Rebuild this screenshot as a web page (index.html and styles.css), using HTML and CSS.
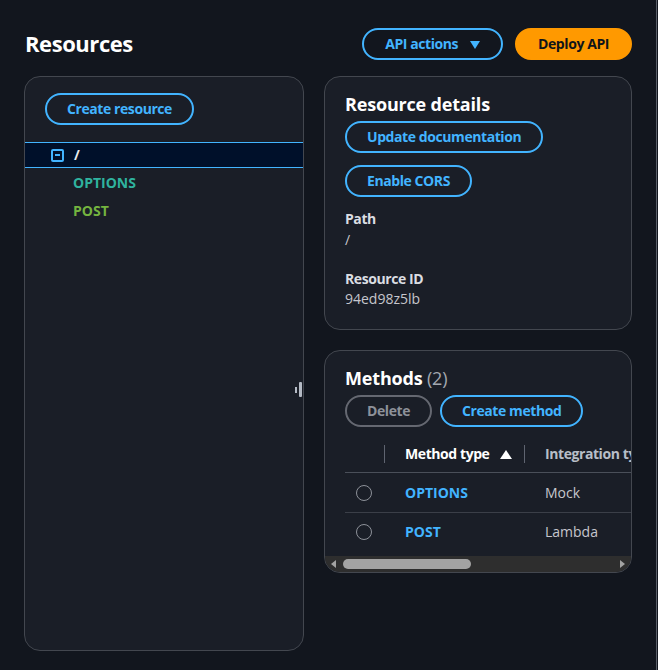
FILE: index.html
```html
<!DOCTYPE html>
<html lang="en">
<head>
<meta charset="utf-8">
<title>Resources</title>
<link rel="stylesheet" href="styles.css">
</head>
<body>
<div class="page">
  <header class="top">
    <h1 class="title">Resources</h1>
    <div class="actions">
      <button class="btn btn-normal btn-wide">API actions <span class="caret"></span></button>
      <button class="btn btn-primary">Deploy API</button>
    </div>
  </header>
  <div class="main">
    <section class="panel tree-panel">
      <div class="tree-top">
        <button class="btn btn-normal">Create resource</button>
      </div>
      <div class="tree-row selected">
        <span class="toggle"><span class="minus"></span></span>
        <span class="path">/</span>
      </div>
      <div class="tree-method m-options">OPTIONS</div>
      <div class="tree-method m-post">POST</div>
      <span class="resizer"><span class="r1"></span><span class="r2"></span></span>
    </section>
    <div class="right">
      <section class="panel card details">
        <h2 class="card-title">Resource details</h2>
        <div class="btn-stack">
          <button class="btn btn-normal">Update documentation</button>
          <button class="btn btn-normal">Enable CORS</button>
        </div>
        <dl class="kv">
          <dt>Path</dt>
          <dd>/</dd>
          <dt class="gap">Resource ID</dt>
          <dd>94ed98z5lb</dd>
        </dl>
      </section>
      <section class="panel card methods">
        <h2 class="card-title">Methods <span class="count">(2)</span></h2>
        <div class="btn-row">
          <button class="btn btn-disabled">Delete</button>
          <button class="btn btn-normal">Create method</button>
        </div>
        <div class="table-wrap">
          <div class="table">
            <div class="tr th">
              <div class="c c-sel"></div>
              <div class="c c-type sorted"><span>Method type</span><span class="sort-up"></span></div>
              <div class="c c-int">Integration type</div>
            </div>
            <div class="tr">
              <div class="c c-sel"><span class="radio"></span></div>
              <div class="c c-type"><span class="link">OPTIONS</span></div>
              <div class="c c-int">Mock</div>
            </div>
            <div class="tr last">
              <div class="c c-sel"><span class="radio"></span></div>
              <div class="c c-type"><span class="link">POST</span></div>
              <div class="c c-int">Lambda</div>
            </div>
          </div>
        </div>
        <div class="hscroll">
          <span class="arrow-l"></span>
          <span class="thumb"></span>
          <span class="arrow-r"></span>
        </div>
      </section>
    </div>
  </div>
</div>
</body>
</html>
```
FILE: styles.css
```css
* { box-sizing: border-box; }
html, body { margin: 0; padding: 0; }
body {
  background: #12161e;
  font-family: "Open Sans", "Noto Sans", sans-serif;
  font-size: 14px;
  line-height: 20px;
  color: #c6c6cd;
  width: 658px;
  height: 670px;
  overflow: hidden;
}
.page {
  width: 657px;
  height: 670px;
  border-right: 1px solid #5b606a;
  padding: 28px 0 0 24px;
}
.top {
  width: 608px;
  height: 32px;
  display: flex;
  align-items: center;
  justify-content: space-between;
}
.title {
  margin: 0;
  font-size: 22px;
  font-weight: 700;
  letter-spacing: -0.02em;
  color: #ffffff;
  line-height: 30px;
  padding-left: 1px;
  margin-top: -2px;
}
.actions { display: flex; gap: 12px; }
.btn {
  font-family: inherit;
  font-size: 14px;
  font-weight: 700;
  letter-spacing: -0.03em;
  line-height: 20px;
  height: 32px;
  border-radius: 20px;
  padding: 4px 20px;
  background: transparent;
  cursor: pointer;
  display: inline-flex;
  align-items: center;
  white-space: nowrap;
}
.btn-normal {
  border: 2px solid #42b4ff;
  color: #42b4ff;
}
.btn-wide { padding: 4px 21px; }
.btn-primary {
  border: 2px solid #ff9900;
  background: #ff9900;
  color: #0f141a;
  padding: 4px 21px;
}
.btn-disabled {
  border: 2px solid #656871;
  color: #8d9199;
}
.caret {
  display: inline-block;
  width: 0; height: 0;
  border-left: 5px solid transparent;
  border-right: 5px solid transparent;
  border-top: 8px solid #42b4ff;
  margin-left: 12px;
  margin-top: 1px;
}
.main {
  margin-top: 16px;
  display: grid;
  grid-template-columns: 280px 308px;
  column-gap: 20px;
  align-items: start;
}
.panel {
  background: #1a1e27;
  border: 1px solid #43474f;
  border-radius: 16px;
}
.tree-panel {
  height: 575px;
  position: relative;
}
.tree-top { padding: 16px 20px 17px; }
.tree-row {
  height: 26px;
  display: flex;
  align-items: center;
  padding-left: 26px;
}
.tree-row.selected {
  background: #00102a;
  border-top: 1px solid #42b4ff;
  border-bottom: 1px solid #42b4ff;
}
.toggle {
  width: 13px; height: 13px;
  border: 2px solid #42b4ff;
  border-radius: 2px;
  display: inline-flex;
  align-items: center;
  justify-content: center;
}
.minus { width: 5px; height: 2px; background: #42b4ff; }
.path {
  color: #e9ebed;
  font-weight: 700;
  margin-left: 10px;
}
.tree-method {
  height: 28px;
  line-height: 28px;
  padding-left: 48px;
  font-weight: 700;
}
.tree-method.m-options { margin-top: 1px; color: #2fb39f; }
.tree-method.m-post { color: #74b43f; }
.resizer {
  position: absolute;
  top: 305px;
  right: 1px;
  display: flex;
  align-items: center;
  gap: 2px;
}
.r1 { width: 2px; height: 6px; background: #b4bac4; }
.r2 { width: 3px; height: 15px; background: #b4bac4; border-radius: 1px; }
.right { display: flex; flex-direction: column; gap: 20px; }
.card { padding: 15px 20px 20px; }
.card-title {
  margin: 0;
  font-size: 18px;
  font-weight: 700;
  line-height: 24px;
  color: #ffffff;
  letter-spacing: -0.01em;
}
.count { color: #a4a8b0; font-weight: 400; }
.btn-stack {
  margin-top: 5px;
  display: flex;
  flex-direction: column;
  align-items: flex-start;
  gap: 12px;
}
.kv { margin: 12px 0 0; }
.kv dt { font-weight: 700; color: #dadde2; letter-spacing: -0.03em; }
.kv dd { margin: 1px 0 0; color: #c6c6cd; }
.kv dt.gap { margin-top: 19px; }
.kv dd:last-child { margin-top: 0; }
.methods {
  height: 223px;
  padding: 15px 0 0 20px;
  overflow: hidden;
  position: relative;
}
.btn-row { margin-top: 5px; display: flex; gap: 8px; }
.table-wrap { margin-top: 18px; overflow: hidden; }
.table { width: 520px; }
.tr {
  display: flex;
  height: 40px;
  align-items: center;
  border-bottom: 1px solid #3b3f48;
}
.tr.th { height: 28px; align-items: flex-start; border-bottom: 1px solid #4a4f59; }
.tr.last { border-bottom: none; height: 38px; }
.c { display: flex; align-items: center; }
.c-sel { width: 40px; justify-content: center; padding-right: 2px; }
.c-type { width: 140px; padding-left: 20px; }
.c-int { flex: 1; padding-left: 20px; }
.th .c { height: 18px; font-weight: 700; color: #b8bec8; letter-spacing: -0.03em; }
.th .c-sel { border-right: 1px solid #5f6470; }
.th .c-type { border-right: 1px solid #5f6470; }
.th .c.sorted { color: #ffffff; }
.sort-up {
  width: 0; height: 0;
  border-left: 6px solid transparent;
  border-right: 6px solid transparent;
  border-bottom: 9px solid #ffffff;
  margin-left: 11px;
}
.radio {
  width: 16px; height: 16px;
  border: 1.5px solid #8d9199;
  border-radius: 50%;
}
.link { color: #42b4ff; font-weight: 700; }
.hscroll {
  position: absolute;
  left: 0; right: 0; bottom: 0;
  height: 16px;
  background: #2e2e2e;
}
.thumb {
  position: absolute;
  left: 18px;
  top: 3px;
  width: 128px;
  height: 10px;
  border-radius: 5px;
  background: #a3a3a3;
}
.arrow-l {
  position: absolute;
  left: 6px; top: 4px;
  width: 0; height: 0;
  border-top: 4px solid transparent;
  border-bottom: 4px solid transparent;
  border-right: 5px solid #a3a3a3;
}
.arrow-r {
  position: absolute;
  right: 6px; top: 4px;
  width: 0; height: 0;
  border-top: 4px solid transparent;
  border-bottom: 4px solid transparent;
  border-left: 5px solid #a3a3a3;
}
```
